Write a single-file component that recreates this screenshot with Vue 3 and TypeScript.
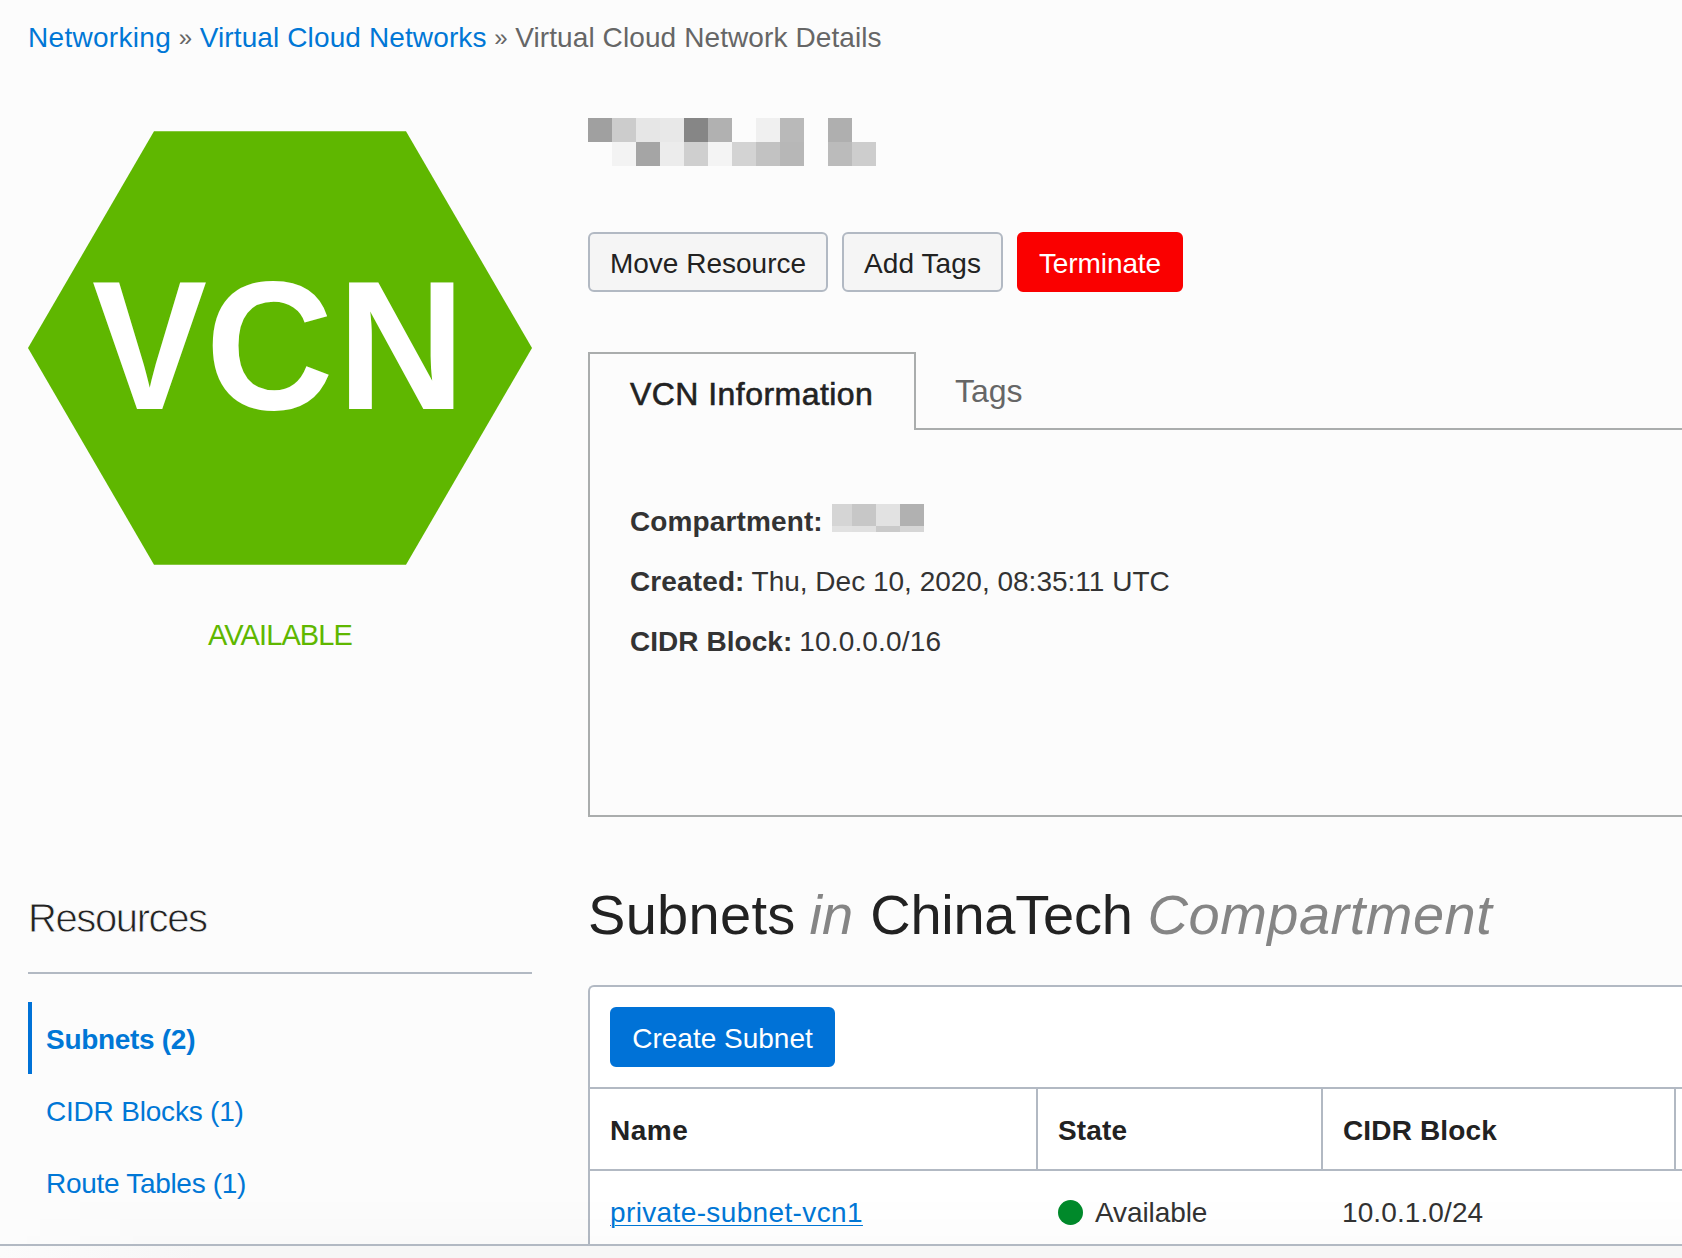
<script setup lang="ts">
interface Subnet {
  name: string
  state: string
  cidr: string
}

const nameBlocks: string[] = [
  '#a0a0a0', '#cccccc', '#e6e6e6', '#e8e8e8', '#868686', '#b1b1b1', 'transparent', '#f0f0f0', '#b9b9b9', 'transparent', '#afafaf', 'transparent',
  'transparent', '#f3f3f3', '#a5a5a5', '#ececec', '#cfcfcf', '#f4f4f4', '#d3d3d3', '#c2c2c2', '#b7b7b7', 'transparent', '#bbbbbb', '#cdcdcd',
]

const compartmentBlocks: string[] = [
  '#d5d5d5', '#c7c7c7', '#e2e2e2', '#b1b1b1',
  '#e1e1e1', '#e0e0e0', '#cacaca', '#d6d6d6',
]

const resources = [
  { label: 'Subnets (2)', active: true, cls: 'res-subnets' },
  { label: 'CIDR Blocks (1)', active: false, cls: 'res-cidr' },
  { label: 'Route Tables (1)', active: false, cls: 'res-routes' },
]

const subnets: Subnet[] = [
  { name: 'private-subnet-vcn1', state: 'Available', cidr: '10.0.1.0/24' },
]
</script>

<template>
  <div class="page">
    <nav class="breadcrumb">
      <a class="crumb first">Networking</a>
      <span class="sep">»</span>
      <a class="crumb">Virtual Cloud Networks</a>
      <span class="sep">»</span>
      <span class="current">Virtual Cloud Network Details</span>
    </nav>

    <div class="main">
      <aside class="side">
        <svg class="hexagon" viewBox="0 0 504 434" width="504" height="434">
          <polygon points="126,0.3 378,0.3 504,217 378,433.7 126,433.7 0,217" fill="#5fb700" />
          <text y="278" fill="#fff" font-size="183" font-weight="700"><tspan x="64" textLength="115" lengthAdjust="spacingAndGlyphs">V</tspan><tspan x="177.6" textLength="128" lengthAdjust="spacingAndGlyphs">C</tspan><tspan x="309.2" textLength="128" lengthAdjust="spacingAndGlyphs">N</tspan></text>
        </svg>
        <div class="status">AVAILABLE</div>

        <h2 class="side-title">Resources</h2>
        <ul class="resources">
          <li v-for="r in resources" :key="r.label" :class="['resource', r.cls, { active: r.active }]">{{ r.label }}</li>
        </ul>
      </aside>

      <section class="content">
        <div class="name-mosaic">
          <i v-for="(c, i) in nameBlocks" :key="i" :style="{ background: c }"></i>
        </div>

        <div class="actions">
          <button class="btn move">Move Resource</button>
          <button class="btn tags">Add Tags</button>
          <button class="btn danger">Terminate</button>
        </div>

        <div class="tabs">
          <div class="tab selected">VCN Information</div>
          <div class="tab other">Tags</div>
        </div>
        <div class="panel">
          <div class="field">
            <b>Compartment:</b>
            <span class="comp-mosaic"><i v-for="(c, i) in compartmentBlocks" :key="i" :style="{ background: c }"></i></span>
          </div>
          <div class="field"><b>Created:</b><span>Thu, Dec 10, 2020, 08:35:11 UTC</span></div>
          <div class="field"><b class="tight">CIDR Block:</b><span class="addr">10.0.0.0/16</span></div>
        </div>

        <h1 class="heading">
          <span class="h-sub">Subnets</span><em class="h-in">in</em><span class="h-name">ChinaTech</span><em class="h-comp">Compartment</em>
        </h1>

        <div class="table">
          <div class="toolbar"><button class="btn primary">Create Subnet</button></div>
          <div class="row head">
            <div class="cell c1">Name</div>
            <div class="cell c2">State</div>
            <div class="cell c3">CIDR Block</div>
            <div class="cell c4"></div>
          </div>
          <div v-for="s in subnets" :key="s.name" class="row body">
            <div class="cell c1"><a class="link">{{ s.name }}</a></div>
            <div class="cell c2"><span class="dot"></span>{{ s.state }}</div>
            <div class="cell c3">{{ s.cidr }}</div>
          </div>
        </div>
      </section>
      <div class="fade"></div>
    </div>
    <footer class="footer"></footer>
  </div>
</template>

<style>
body {
  background: #fcfcfc;
  overflow: hidden;
}
</style>

<style scoped>
.page {
  display: flex;
  flex-direction: column;
  height: 1258px;
  overflow: hidden;
  background: #fcfcfc;
  color: #333;
  font-family: "Liberation Sans", Arial, sans-serif;
  font-size: 28px;
  white-space: nowrap;
}
.page * {
  box-sizing: border-box;
}
.breadcrumb {
  display: flex;
  flex: none;
  height: 74px;
  padding: 19px 0 0 28px;
  line-height: 37px;
  color: #666;
}
.crumb {
  color: #0077d6;
  letter-spacing: 0.12px;
}
.crumb.first {
  letter-spacing: 0.3px;
}
.sep {
  width: 28.6px;
  text-align: center;
  font-size: 24px;
}
.current {
  letter-spacing: 0.1px;
}
.main {
  position: relative;
  display: flex;
  flex: none;
  gap: 56px;
  height: 1170px;
  padding-left: 28px;
  overflow: hidden;
}
.side {
  flex: none;
  width: 504px;
  padding-top: 57px;
}
.hexagon {
  display: block;
}
.status {
  margin-top: 50px;
  line-height: 40px;
  text-align: center;
  font-size: 29px;
  letter-spacing: -0.9px;
  color: #5fb700;
}
.side-title {
  margin: 242px 0 0;
  padding: 1px 0 34px;
  border-bottom: 2px solid #b2b9c3;
  line-height: 40px;
  box-sizing: content-box !important;
  font-size: 40px;
  font-weight: 400;
  letter-spacing: -1.4px;
  color: #222;
  -webkit-text-stroke: 0.8px #fcfcfc;
}
.resources {
  margin: 28px 0 0;
  padding: 0;
  list-style: none;
}
.resource {
  height: 72px;
  padding-left: 14px;
  border-left: 4px solid transparent;
  line-height: 76px;
  color: #0077d6;
}
.resource.active {
  border-left-color: #0072d7;
  font-weight: 700;
  letter-spacing: -0.3px;
}
.res-cidr {
  letter-spacing: -0.2px;
}
.res-routes {
  letter-spacing: -0.3px;
}
.content {
  flex: 1;
  min-width: 0;
  padding-top: 44px;
}
.name-mosaic {
  display: grid;
  grid-template-columns: repeat(12, 24px);
  grid-auto-rows: 24px;
}
.actions {
  display: flex;
  gap: 14px;
  margin-top: 66px;
}
.btn {
  height: 60px;
  padding: 3px 0 0;
  border: 2px solid #b2b9c3;
  border-radius: 6px;
  background: #f5f5f5;
  color: #222;
  font: 28px "Liberation Sans", Arial, sans-serif;
  text-align: center;
}
.btn.move {
  width: 240px;
}
.btn.tags {
  width: 161px;
  letter-spacing: 0.1px;
}
.btn.danger {
  width: 166px;
  border-color: #fa0000;
  background: #fa0000;
  color: #fff;
  letter-spacing: -0.1px;
}
.btn.primary {
  width: 225px;
  border-color: #0072d7;
  background: #0072d7;
  color: #fff;
}
.tabs {
  display: flex;
  height: 78px;
  margin-top: 60px;
  font-size: 32px;
}
.tab.selected {
  width: 328px;
  padding-left: 40px;
  border: 2px solid #aaadad;
  border-bottom: 0;
  line-height: 80px;
  color: #222;
  letter-spacing: 0.45px;
  -webkit-text-stroke: 0.6px #222;
}
.tab.other {
  flex: 1;
  padding-left: 39px;
  border-bottom: 2px solid #aaadad;
  line-height: 78px;
  color: #666;
}
.panel {
  height: 387px;
  padding: 62px 0 0 40px;
  border-left: 2px solid #aaadad;
  border-bottom: 2px solid #aaadad;
}
.field {
  display: flex;
  gap: 7px;
  height: 60px;
  line-height: 60px;
}
.field b {
  letter-spacing: 0.12px;
}
.field b.tight {
  letter-spacing: 0.05px;
}
.field .addr {
  letter-spacing: 0.15px;
}
.comp-mosaic {
  display: grid;
  grid-template-columns: 20px 24px 24px 24px;
  grid-template-rows: 22px 6px;
  margin: 12px 0 0 2.2px;
}
.heading {
  display: flex;
  margin: 68px 0 0;
  line-height: 60px;
  font-size: 56px;
  font-weight: 400;
  color: #222;
}
.heading em {
  color: #858585;
}
.h-sub {
  letter-spacing: 0.3px;
}
.h-in {
  margin: 0 17px 0 14px;
}
.h-name {
  letter-spacing: -0.25px;
}
.h-comp {
  margin-left: 15px;
  letter-spacing: 0.5px;
}
.table {
  height: 300px;
  margin-top: 40px;
  border: 2px solid #b2b9c3;
  border-right: 0;
  border-radius: 6px 0 0 0;
  background: #fff;
}
.toolbar {
  display: flex;
  height: 102px;
  padding: 20px;
  border-bottom: 2px solid #b2b9c3;
}
.row {
  display: flex;
}
.head {
  height: 82px;
  border-bottom: 2px solid #b2b9c3;
  line-height: 84px;
  font-weight: 700;
  color: #222;
}
.cell {
  flex: none;
  padding-left: 20px;
}
.head .cell {
  height: 80px;
  border-right: 2px solid #b2b9c3;
  letter-spacing: 0.15px;
}
.head .c1 {
  letter-spacing: 0.5px;
}
.head .c2 {
  display: block;
}
.head .c4 {
  flex: 1;
  border: 0;
}
.c1 {
  width: 448px;
}
.c2 {
  display: flex;
  align-items: center;
  width: 285px;
}
.c3 {
  width: 353px;
}
.body {
  height: 83px;
  line-height: 83px;
}
.body .c2 {
  letter-spacing: -0.1px;
}
.body .c3 {
  padding-left: 19px;
  letter-spacing: 0.1px;
}
.link {
  color: #0077d6;
  letter-spacing: 0.37px;
  text-decoration: underline;
  text-decoration-thickness: 1px;
  text-underline-offset: 3px;
}
.dot {
  width: 25px;
  height: 25px;
  margin: -1px 12px 0 0;
  border-radius: 50%;
  background: #008a2b;
}
.fade {
  position: absolute;
  inset: auto 0 0 0;
  height: 50px;
  background: linear-gradient(to bottom, rgba(0, 0, 0, 0), rgba(0, 0, 0, 0.012));
  mask-image: linear-gradient(to right, transparent, #000 160px);
}
.footer {
  flex: none;
  height: 14px;
  border-top: 2px solid #b2b9c3;
  background: linear-gradient(to right, #fbfbfb, #f6f6f6 200px);
}
</style>
